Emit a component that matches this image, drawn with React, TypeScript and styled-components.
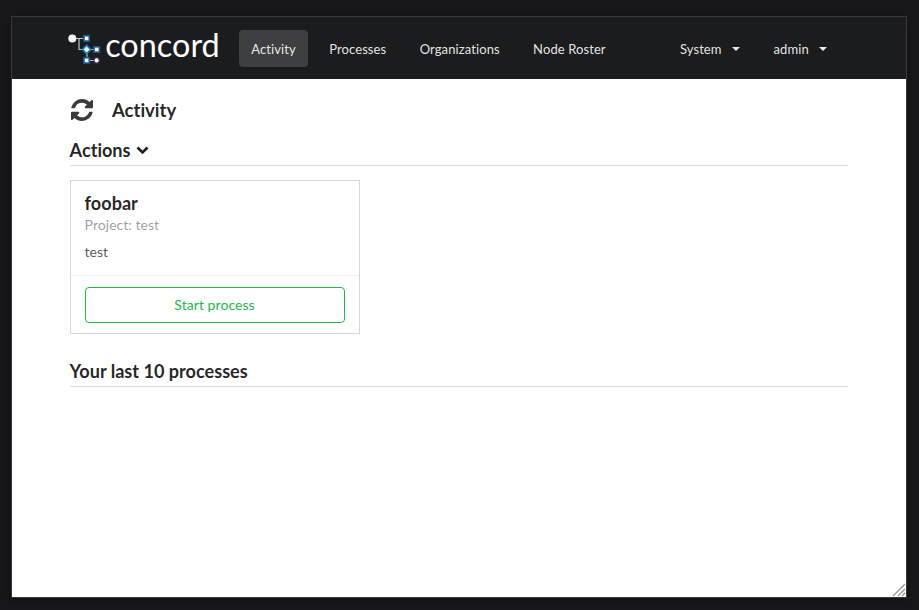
import React from 'react';
import styled, { createGlobalStyle } from 'styled-components';

const GlobalStyle = createGlobalStyle`
  *, *::before, *::after { box-sizing: border-box; }
  html, body { margin: 0; padding: 0; background: #18181a; }
  body {
    font-family: Lato, sans-serif;
    font-size: 14px;
    font-variant-ligatures: none;
    color: rgba(0, 0, 0, 0.87);
    overflow: hidden;
  }
`;

const Desktop = styled.div`
  height: 610px;
  padding: 16px 12px 12px 11px;
  background: #18181a;
`;

const Window = styled.div`
  display: flex;
  flex-direction: column;
  position: relative;
  height: 582px;
  border: 1px solid #37383a;
  background: #fff;
  box-shadow: 0 2px 10px rgba(0, 0, 0, 0.35);
`;

const Header = styled.header`
  display: flex;
  align-items: center;
  height: 62px;
  padding: 0 62px 0 56px;
  background: #1b1c1d;
`;

const Logo = styled.svg`
  display: block;
  flex: none;
  width: 152px;
  height: 40px;
  margin-right: 14.5px;
  overflow: visible;
`;

const Nav = styled.nav`
  display: flex;
  align-items: center;
`;

const RightNav = styled(Nav)`
  margin-left: auto;
`;

const NavItem = styled.a<{ $active?: boolean }>`
  display: flex;
  align-items: center;
  height: 37px;
  margin: 0 4.64px;
  padding: 2px 12.07px 0;
  border-radius: 4px;
  font-size: 13px;
  line-height: 15px;
  letter-spacing: 0.1px;
  color: rgba(255, 255, 255, 0.9);
  background: ${(p) => (p.$active ? '#3e3f40' : 'transparent')};
`;

const Caret = styled.span`
  margin-left: 10.5px;
  border: 4px solid transparent;
  border-top-color: currentColor;
  border-bottom: 0;
`;

const Content = styled.main`
  padding: 0 58px;
`;

const TitleRow = styled.div`
  display: flex;
  align-items: center;
  gap: 19px;
  height: 62px;
  padding-left: 1px;
  color: #3a3a3a;
`;

const Title = styled.h2`
  margin: 0;
  font-size: 18.5px;
  font-weight: 700;
  line-height: 24px;
  color: rgba(0, 0, 0, 0.87);
`;

const SectionTitle = styled(Title)`
  display: flex;
  align-items: center;
  gap: 5px;
  height: 25px;
  margin-left: -0.4px;
  padding-bottom: 6px;
  border-bottom: 1px solid #dbdbdc;
  font-size: 18.1px;
`;

const Card = styled.section`
  width: 290px;
  height: 154px;
  margin: 14px 0 28px;
  border: 1px solid #d4d4e8;
`;

const CardBody = styled.div`
  height: 95px;
  padding: 11px 14px 0 13.6px;
  border-bottom: 1px solid #f1f1f1;
`;

const CardTitle = styled.h3`
  margin: 0;
  font-size: 18.1px;
  line-height: 23px;
`;

const CardMeta = styled.div`
  line-height: 20px;
  letter-spacing: 0.04px;
  color: rgba(0, 0, 0, 0.4);
`;

const CardText = styled.div`
  margin-top: 7px;
  line-height: 20px;
  color: rgba(0, 0, 0, 0.68);
`;

const StartButton = styled.button`
  display: block;
  width: 260px;
  height: 36px;
  margin: 11px 14px 0;
  padding: 0 1px 0 0;
  border: 1px solid #21ba45;
  border-radius: 4px;
  background: #fff;
  color: #21ba45;
  font: 400 14px/14px Lato, sans-serif;
  letter-spacing: 0.06px;
`;

const Grip = styled.svg`
  position: absolute;
  right: 0;
  bottom: 0;
`;

function ConcordLogo() {
  return (
    <Logo viewBox="0 0 152 40" role="img" aria-label="concord">
      <path d="M4 10.5H19M11 10.5V21.5H28M19 21V32.5H28" fill="none" stroke="#c3c5c7" strokeWidth="1.2" />
      <circle cx="4.3" cy="10.5" r="4" fill="#edf7fd" />
      <g fill="#fff" stroke="#17569a" strokeWidth="1.7">
        <rect x="15.9" y="7.7" width="5.4" height="5.4" />
        <rect x="26" y="18.8" width="5.4" height="5.4" />
        <rect x="15.9" y="29.7" width="5.4" height="5.4" />
        <path d="M18.6 17.4L22.7 21.5L18.6 25.6L14.5 21.5Z" stroke="#1781c9" />
        <circle cx="28.6" cy="32.4" r="2.7" stroke="#3a2b5c" strokeWidth="1.2" />
      </g>
      <text
        x="37.2"
        y="28.6"
        fill="#fff"
        fontFamily="Lato, sans-serif"
        fontSize="33"
        textLength="114.5"
        lengthAdjust="spacingAndGlyphs"
      >
        concord
      </text>
    </Logo>
  );
}

function RefreshIcon() {
  return (
    <svg width="22" height="22" viewBox="0 0 1536 1536" fill="currentColor">
      <path d="M1511 928q0 5-1 7-64 268-268 434.5t-478 166.5q-146 0-282.5-55t-243.5-157l-129 129q-19 19-45 19t-45-19-19-45v-448q0-26 19-45t45-19h448q26 0 45 19t19 45-19 45l-137 137q71 66 161 102t187 36q134 0 250-65t186-179q11-17 53-117 8-23 30-23h192q13 0 22.5 9.5t9.5 22.5zm25-800v448q0 26-19 45t-45 19h-448q-26 0-45-19t-19-45 19-45l138-138q-148-137-349-137-134 0-250 65t-186 179q-11 17-53 117-8 23-30 23h-199q-13 0-22.5-9.5t-9.5-22.5v-7q65-268 270-434.5t480-166.5q146 0 284 55.5t245 156.5l130-129q19-19 45-19t45 19 19 45z" />
    </svg>
  );
}

function ChevronIcon() {
  return (
    <svg width="13" height="12" viewBox="0 0 13 12">
      <path d="M1.5 3.6L6.5 8.4L11.5 3.6" fill="none" stroke="currentColor" strokeWidth="2.8" />
    </svg>
  );
}

const pages = ['Activity', 'Processes', 'Organizations', 'Node Roster'];

export default function App() {
  return (
    <>
      <GlobalStyle />
      <Desktop>
        <Window>
          <Header>
            <ConcordLogo />
            <Nav>
              {pages.map((page) => (
                <NavItem key={page} $active={page === 'Activity'}>{page}</NavItem>
              ))}
            </Nav>
            <RightNav>
              {['System', 'admin'].map((menu) => (
                <NavItem key={menu}>{menu}<Caret /></NavItem>
              ))}
            </RightNav>
          </Header>
          <Content>
            <TitleRow>
              <RefreshIcon />
              <Title>Activity</Title>
            </TitleRow>
            <SectionTitle>Actions <ChevronIcon /></SectionTitle>
            <Card>
              <CardBody>
                <CardTitle>foobar</CardTitle>
                <CardMeta>Project: test</CardMeta>
                <CardText>test</CardText>
              </CardBody>
              <StartButton>Start process</StartButton>
            </Card>
            <SectionTitle>Your last 10 processes</SectionTitle>
          </Content>
          <Grip width="14" height="14" viewBox="0 0 14 14">
            <path d="M1 13L13 1M6 13L13 6M10 13L13 10" fill="none" stroke="#929292" strokeWidth="1.2" />
          </Grip>
        </Window>
      </Desktop>
    </>
  );
}
